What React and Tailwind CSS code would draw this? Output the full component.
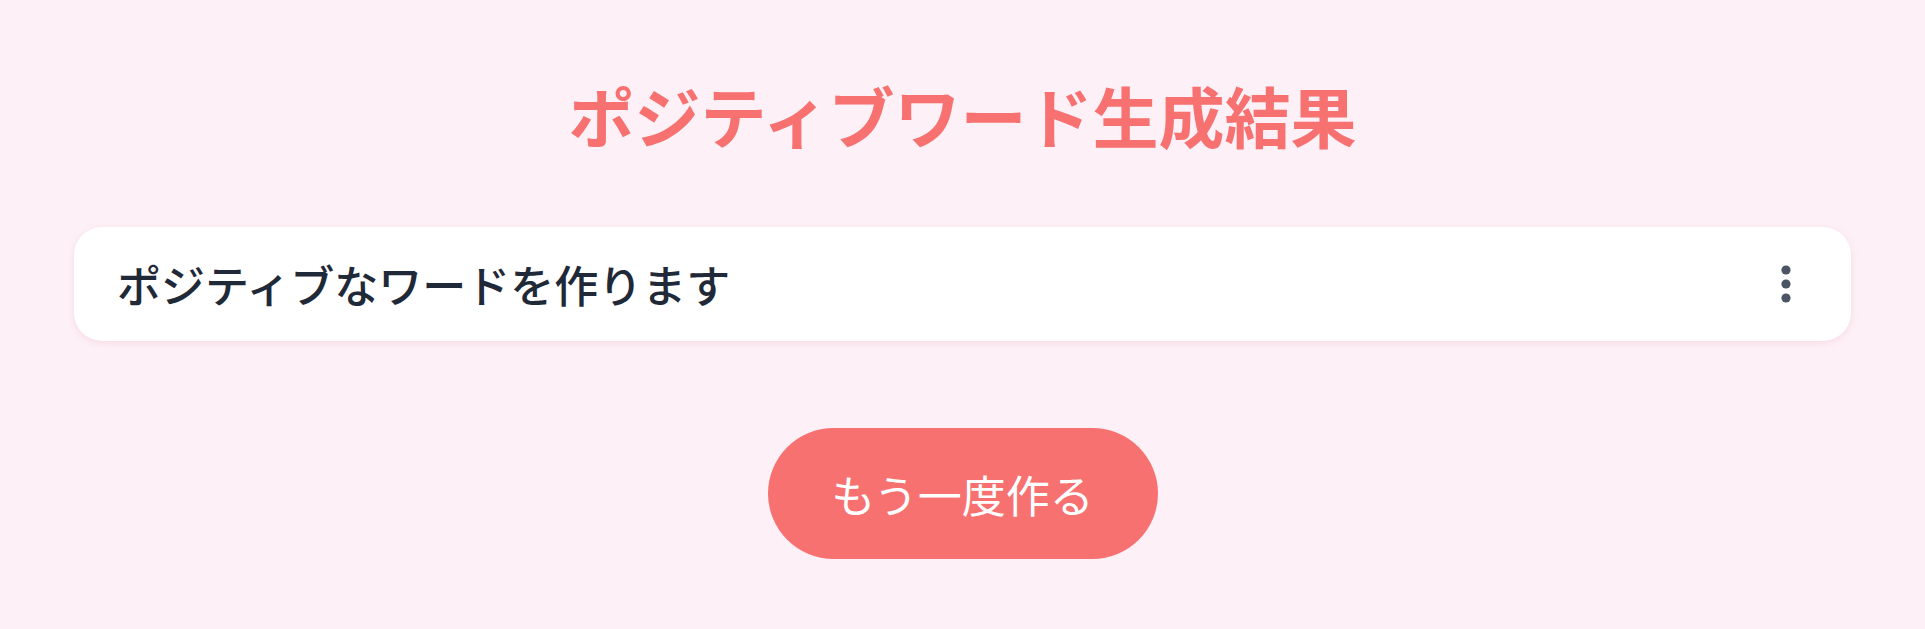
import React from "react";

export default function App() {
    const font = { fontFamily: '"Noto Sans CJK JP", "Noto Sans", sans-serif' };

    return (
        <div className="min-h-screen bg-[#fdf0f6] px-[74px] pt-[75px]" style={font}>
            <h1 className="text-center text-[66px] leading-[79px] font-semibold text-[#f87171]">
                ポジティブワード生成結果
            </h1>

            <div className="mt-[73px] h-[114px] bg-white rounded-[28px] shadow-[0_2px_6px_rgba(236,180,200,0.35)] flex items-center justify-between pl-[43px] pr-[59px]">
                <span className="text-[44px] leading-none font-medium text-[#1f2937]">
                    ポジティブなワードを作ります
                </span>
                <button className="flex items-center justify-center w-[12px]">
                    <svg width="12" height="40" viewBox="0 0 12 40">
                        <circle cx="6" cy="6" r="4.6" fill="#4b5563" />
                        <circle cx="6" cy="20" r="4.6" fill="#4b5563" />
                        <circle cx="6" cy="34" r="4.6" fill="#4b5563" />
                    </svg>
                </button>
            </div>

            <div className="flex justify-center mt-[87px]">
                <button className="w-[390px] h-[131px] rounded-full bg-[#f87171] text-white text-[44px] leading-none">
                    もう一度作る
                </button>
            </div>
        </div>
    );
}
